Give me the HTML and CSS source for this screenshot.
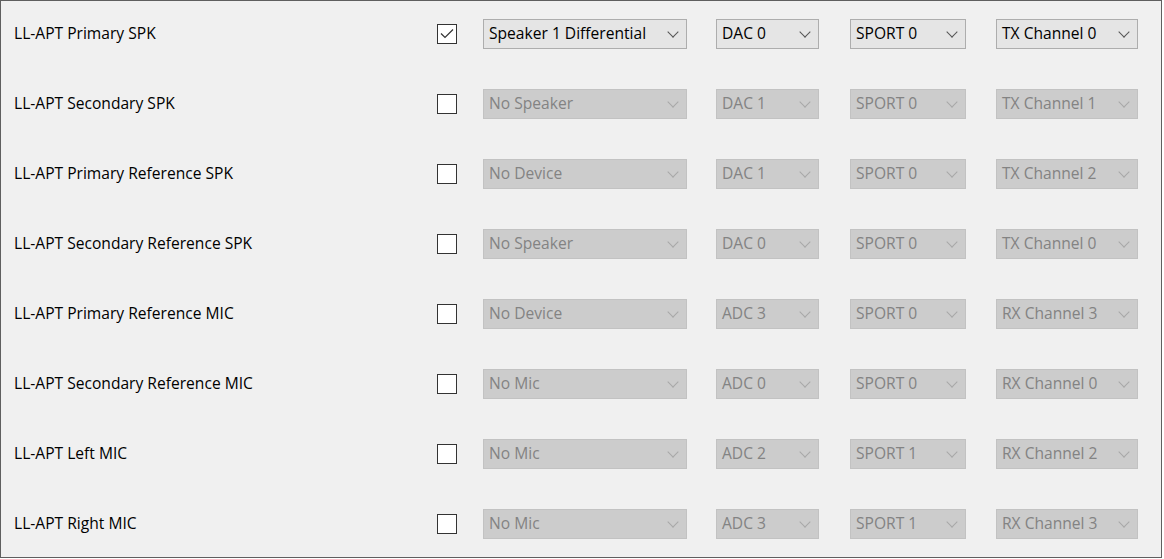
FILE: index.html
```html
<!DOCTYPE html>
<html>
<head>
<meta charset="utf-8">
<link rel="stylesheet" href="styles.css">
</head>
<body>
<div class="frame">
  <div class="row">
    <div class="label">LL-APT Primary SPK</div>
    <div class="cell"><span class="check on"><svg viewBox="0 0 20 20" width="20" height="20"><polyline points="4,9.5 8,13.5 16,5.5" fill="none" stroke="#333" stroke-width="1.2"/></svg></span></div>
    <div class="cell"><div class="combo w1">Speaker 1 Differential<i class="chev"></i></div></div>
    <div class="cell"><div class="combo w2">DAC 0<i class="chev"></i></div></div>
    <div class="cell"><div class="combo w3">SPORT 0<i class="chev"></i></div></div>
    <div class="cell"><div class="combo w4">TX Channel 0<i class="chev"></i></div></div>
  </div>
  <div class="row">
    <div class="label">LL-APT Secondary SPK</div>
    <div class="cell"><span class="check"></span></div>
    <div class="cell"><div class="combo w1 off">No Speaker<i class="chev"></i></div></div>
    <div class="cell"><div class="combo w2 off">DAC 1<i class="chev"></i></div></div>
    <div class="cell"><div class="combo w3 off">SPORT 0<i class="chev"></i></div></div>
    <div class="cell"><div class="combo w4 off">TX Channel 1<i class="chev"></i></div></div>
  </div>
  <div class="row">
    <div class="label">LL-APT Primary Reference SPK</div>
    <div class="cell"><span class="check"></span></div>
    <div class="cell"><div class="combo w1 off">No Device<i class="chev"></i></div></div>
    <div class="cell"><div class="combo w2 off">DAC 1<i class="chev"></i></div></div>
    <div class="cell"><div class="combo w3 off">SPORT 0<i class="chev"></i></div></div>
    <div class="cell"><div class="combo w4 off">TX Channel 2<i class="chev"></i></div></div>
  </div>
  <div class="row">
    <div class="label">LL-APT Secondary Reference SPK</div>
    <div class="cell"><span class="check"></span></div>
    <div class="cell"><div class="combo w1 off">No Speaker<i class="chev"></i></div></div>
    <div class="cell"><div class="combo w2 off">DAC 0<i class="chev"></i></div></div>
    <div class="cell"><div class="combo w3 off">SPORT 0<i class="chev"></i></div></div>
    <div class="cell"><div class="combo w4 off">TX Channel 0<i class="chev"></i></div></div>
  </div>
  <div class="row">
    <div class="label">LL-APT Primary Reference MIC</div>
    <div class="cell"><span class="check"></span></div>
    <div class="cell"><div class="combo w1 off">No Device<i class="chev"></i></div></div>
    <div class="cell"><div class="combo w2 off">ADC 3<i class="chev"></i></div></div>
    <div class="cell"><div class="combo w3 off">SPORT 0<i class="chev"></i></div></div>
    <div class="cell"><div class="combo w4 off">RX Channel 3<i class="chev"></i></div></div>
  </div>
  <div class="row">
    <div class="label">LL-APT Secondary Reference MIC</div>
    <div class="cell"><span class="check"></span></div>
    <div class="cell"><div class="combo w1 off">No Mic<i class="chev"></i></div></div>
    <div class="cell"><div class="combo w2 off">ADC 0<i class="chev"></i></div></div>
    <div class="cell"><div class="combo w3 off">SPORT 0<i class="chev"></i></div></div>
    <div class="cell"><div class="combo w4 off">RX Channel 0<i class="chev"></i></div></div>
  </div>
  <div class="row">
    <div class="label">LL-APT Left MIC</div>
    <div class="cell"><span class="check"></span></div>
    <div class="cell"><div class="combo w1 off">No Mic<i class="chev"></i></div></div>
    <div class="cell"><div class="combo w2 off">ADC 2<i class="chev"></i></div></div>
    <div class="cell"><div class="combo w3 off">SPORT 1<i class="chev"></i></div></div>
    <div class="cell"><div class="combo w4 off">RX Channel 2<i class="chev"></i></div></div>
  </div>
  <div class="row">
    <div class="label">LL-APT Right MIC</div>
    <div class="cell"><span class="check"></span></div>
    <div class="cell"><div class="combo w1 off">No Mic<i class="chev"></i></div></div>
    <div class="cell"><div class="combo w2 off">ADC 3<i class="chev"></i></div></div>
    <div class="cell"><div class="combo w3 off">SPORT 1<i class="chev"></i></div></div>
    <div class="cell"><div class="combo w4 off">RX Channel 3<i class="chev"></i></div></div>
  </div>
</div>
</body>
</html>
```

FILE: styles.css
```css
html, body {
  margin: 0;
  padding: 0;
  background: #ffffff;
}
body {
  font-family: "Open Sans", "Noto Sans", "Liberation Sans", sans-serif;
  font-size: 15.6px;
  color: #000;
}
.frame {
  box-sizing: border-box;
  width: 1162px;
  height: 558px;
  border: 1px solid #5f5f5f;
  background: #f0f0f0;
  overflow: hidden;
  padding-left: 13px;
}
.row {
  box-sizing: border-box;
  height: 70px;
  padding-bottom: 4px;
  display: grid;
  grid-template-columns: 423px 46px 233px 134px 146px 142px;
  align-items: center;
}
.label {
  white-space: nowrap;
  color: #000;
  line-height: 20px;
  padding-bottom: 2px;
}
.cell {
  display: flex;
  align-items: center;
}
.check {
  box-sizing: border-box;
  width: 20px;
  height: 20px;
  border: 1px solid #333333;
  background: #ffffff;
  display: block;
}
.check svg {
  display: block;
  margin: -1px;
}
.combo {
  box-sizing: border-box;
  height: 30px;
  border: 1px solid #adadad;
  background: #e5e5e5;
  color: #000;
  padding-left: 5px;
  padding-bottom: 2px;
  line-height: 20px;
  display: flex;
  align-items: center;
  position: relative;
  white-space: nowrap;
}
.w1 { width: 204px; }
.w2 { width: 103px; }
.w3 { width: 116px; }
.w4 { width: 142px; }
.chev {
  position: absolute;
  right: 9px;
  top: 8px;
  width: 7px;
  height: 7px;
  border-right: 1px solid #555;
  border-bottom: 1px solid #555;
  transform: rotate(45deg);
}
.combo.off {
  background: #cccccc;
  border-color: #c2c2c2;
  color: #838383;
}
.combo.off .chev {
  border-color: #a8a8a8;
}
```
